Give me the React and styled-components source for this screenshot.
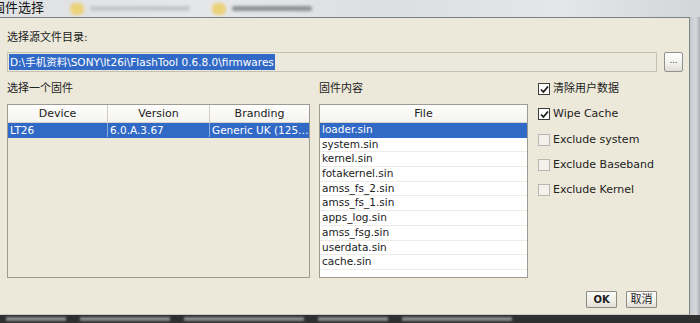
import React from 'react';
import styled, { createGlobalStyle } from 'styled-components';

const Global = createGlobalStyle`
  html, body { margin: 0; padding: 0; background: #c9ccd0; }
  body { font-family: "DejaVu Sans", "Noto Sans CJK SC", sans-serif; }
  * { box-sizing: border-box; }
`;

const Screen = styled.div`
  width: 700px;
  height: 323px;
  display: flex;
  flex-direction: column;
  overflow: hidden;
`;

const TitleStrip = styled.div`
  height: 17px;
  flex: none;
  display: flex;
  align-items: flex-start;
  overflow: hidden;
  background: linear-gradient(90deg, #dfe1e3 0%, #e6e7e8 30%, #dcdfe2 55%, #e4e6e8 80%, #d3d6d9 100%);
`;

const TitleText = styled.span`
  font-family: "Noto Sans CJK SC", sans-serif;
  font-size: 13px;
  line-height: 14px;
  color: #151515;
  margin-left: -8px;
  flex: none;
`;

const TaskTab = styled.div`
  display: flex;
  align-items: center;
  gap: 6px;
  height: 17px;
  margin-left: ${(p) => p.$offset}px;
  flex: none;
  filter: blur(1.8px);
`;

const TaskIcon = styled.span`
  width: 14px;
  height: 12px;
  border-radius: 5px;
  background: #ecd27a;
  flex: none;
`;

const TaskLabel = styled.span`
  width: ${(p) => p.$w}px;
  height: 5px;
  border-radius: 2px;
  background: ${(p) => p.$c};
`;

const Middle = styled.div`
  flex: none;
  height: 298px;
  display: flex;
`;

const Dialog = styled.div`
  width: 690px;
  flex: none;
  background: #ece9da;
  border-top: 1px solid #7d8186;
  border-right: 1px solid #7f8388;
  border-bottom: 1px solid #c9c9c6;
  padding: 0 5px 6px 7px;
  display: flex;
  flex-direction: column;
  color: #222;
`;

const Gutter = styled.div`
  flex: 1;
  background: linear-gradient(90deg, #c6c9cd, #d6d8db 60%, #a9adb2);
`;

const Label = styled.div`
  font-size: 11px;
  line-height: 14px;
  height: 14px;
  margin-top: ${(p) => p.$mt || 0}px;
  white-space: nowrap;
`;

const PathRow = styled.div`
  margin-top: 7px;
  height: 20px;
  display: flex;
  gap: 7px;
  padding-right: 1px;
`;

const PathField = styled.div`
  flex: 1;
  border: 1px solid #c4c1b3;
  border-radius: 1px;
  background: #ebe8dc;
  padding: 1px 1px;
  display: flex;
  align-items: center;
`;

const Selected = styled.span`
  background: #3169c6;
  color: #fff;
  font-size: 10.5px;
  line-height: 16px;
  padding: 0 1px 0 1px;
  white-space: nowrap;
`;

const SmallButton = styled.button`
  width: 19px;
  height: 20px;
  padding: 0 0 3px 0;
  border: 1px solid #8f9091;
  border-radius: 2px;
  background: linear-gradient(#ffffff, #f1f0eb 60%, #dedcd3);
  font-family: "DejaVu Sans", sans-serif;
  font-size: 8px;
  line-height: 10px;
  color: #333;
  letter-spacing: 0;
`;

const Main = styled.div`
  margin-top: 10px;
  display: grid;
  grid-template-columns: 303px 209px 1fr;
  column-gap: 9px;
`;

const Column = styled.div`
  display: flex;
  flex-direction: column;
  gap: 8px;
`;

const TableBox = styled.div`
  height: 174px;
  border: 1px solid #9c9b94;
  background: ${(p) => p.$bg};
  overflow: hidden;
`;

const HeaderRow = styled.div`
  display: grid;
  grid-template-columns: ${(p) => p.$cols};
  height: 18px;
  border-bottom: 1px solid #d6d4cb;
`;

const HeaderCell = styled.div`
  background: linear-gradient(#fefefd, #f4f3ee);
  border-right: 1px solid #cfcdc3;
  font-size: 11px;
  line-height: 17px;
  text-align: center;
  color: #222;
  &:last-child { border-right: none; }
`;

const DataRow = styled.div`
  display: grid;
  grid-template-columns: ${(p) => p.$cols};
  height: ${(p) => p.$h}px;
  background: ${(p) => (p.$sel ? '#3169c6' : 'transparent')};
  color: ${(p) => (p.$sel ? '#fff' : '#222')};
  border-bottom: 1px solid ${(p) => (p.$sel ? '#3169c6' : p.$line)};
`;

const DataCell = styled.div`
  min-width: 0;
  font-size: 10.5px;
  line-height: ${(p) => p.$lh}px;
  padding-left: 2px;
  white-space: nowrap;
  overflow: hidden;
  text-overflow: ellipsis;
  border-right: 1px solid ${(p) => (p.$sep ? 'rgba(255,255,255,0.45)' : 'transparent')};
  &:last-child { border-right: none; }
`;

const Options = styled.div`
  display: flex;
  flex-direction: column;
  gap: 11.25px;
  margin-left: 1px;
`;

const Option = styled.label`
  display: flex;
  align-items: center;
  gap: 3px;
  height: 14px;
  font-size: 11px;
  line-height: 14px;
  white-space: nowrap;
  color: #222;
`;

const Box = styled.span`
  width: 12px;
  height: 12px;
  flex: none;
  border: 1px solid ${(p) => (p.$on ? '#3b3b3b' : '#b9b8b2')};
  background: ${(p) => (p.$on ? '#ffffff' : '#f3f2ed')};
  display: flex;
  align-items: center;
  justify-content: center;
`;

const Footer = styled.div`
  margin-top: 13px;
  display: flex;
  justify-content: flex-end;
  gap: 9px;
  margin-right: 27px;
`;

const DialogButton = styled.button`
  width: 31px;
  height: 17px;
  padding: 0;
  border: 1px solid #8b8a83;
  border-radius: 1px;
  background: linear-gradient(#fbfbf8, #efeee8 60%, #e2e0d7);
  font-family: "DejaVu Sans", "Noto Sans CJK SC", sans-serif;
  font-size: ${(p) => (p.$bold ? 10 : 11)}px;
  font-weight: ${(p) => (p.$bold ? 700 : 400)};
  line-height: 15px;
  color: #1c1c1c;
`;

const BottomStrip = styled.div`
  flex: 1;
  background: #2f2f2f;
  display: flex;
  align-items: center;
  gap: 14px;
  padding-left: 6px;
  overflow: hidden;
`;

const Blurred = styled.span`
  width: ${(p) => p.$w}px;
  height: 4px;
  background: #8a8a8a;
  filter: blur(1px);
  flex: none;
`;

const Check = () => (
  <svg width="9" height="9" viewBox="0 0 9 9">
    <path d="M1 4.5 L3.4 7 L8 1.5" fill="none" stroke="#1a1a1a" strokeWidth="1.8" />
  </svg>
);

const fwCols = '100px 102px minmax(0, 1fr)';
const files = [
  'loader.sin',
  'system.sin',
  'kernel.sin',
  'fotakernel.sin',
  'amss_fs_2.sin',
  'amss_fs_1.sin',
  'apps_log.sin',
  'amss_fsg.sin',
  'userdata.sin',
  'cache.sin',
];
const options = [
  { label: '清除用户数据', on: true },
  { label: 'Wipe Cache', on: true },
  { label: 'Exclude system', on: false },
  { label: 'Exclude Baseband', on: false },
  { label: 'Exclude Kernel', on: false },
];

export default function App() {
  return (
    <Screen>
      <Global />
      <TitleStrip>
        <TitleText>固件选择</TitleText>
        <TaskTab $offset={26}>
          <TaskIcon />
          <TaskLabel $w={100} $c="#c4c7cb" />
        </TaskTab>
        <TaskTab $offset={22}>
          <TaskIcon />
          <TaskLabel $w={80} $c="#8d9196" />
        </TaskTab>
      </TitleStrip>
      <Middle>
        <Dialog>
          <Label $mt={13}>选择源文件目录:</Label>
          <PathRow>
            <PathField>
              <Selected>D:\手机资料\SONY\lt26i\FlashTool 0.6.8.0\firmwares</Selected>
            </PathField>
            <SmallButton>...</SmallButton>
          </PathRow>
          <Main>
            <Column>
              <Label>选择一个固件</Label>
              <TableBox $bg="#ece9da">
                <HeaderRow $cols={fwCols}>
                  <HeaderCell>Device</HeaderCell>
                  <HeaderCell>Version</HeaderCell>
                  <HeaderCell>Branding</HeaderCell>
                </HeaderRow>
                <DataRow $cols={fwCols} $h={15} $sel>
                  <DataCell $lh={14} $sep>LT26</DataCell>
                  <DataCell $lh={14} $sep>6.0.A.3.67</DataCell>
                  <DataCell $lh={14}>Generic UK (1254-6546 R4A)</DataCell>
                </DataRow>
              </TableBox>
            </Column>
            <Column>
              <Label>固件内容</Label>
              <TableBox $bg="#ffffff">
                <HeaderRow $cols="1fr">
                  <HeaderCell>File</HeaderCell>
                </HeaderRow>
                {files.map((f, i) => (
                  <DataRow key={f} $cols="1fr" $h={14.7} $sel={i === 0} $line="#ecebe6">
                    <DataCell $lh={13.7}>{f}</DataCell>
                  </DataRow>
                ))}
              </TableBox>
            </Column>
            <Options>
              {options.map((o) => (
                <Option key={o.label}>
                  <Box $on={o.on}>{o.on && <Check />}</Box>
                  {o.label}
                </Option>
              ))}
            </Options>
          </Main>
          <Footer>
            <DialogButton $bold>OK</DialogButton>
            <DialogButton>取消</DialogButton>
          </Footer>
        </Dialog>
        <Gutter />
      </Middle>
      <BottomStrip>
        <Blurred $w={60} />
        <Blurred $w={90} />
        <Blurred $w={120} />
        <Blurred $w={70} />
        <Blurred $w={110} />
      </BottomStrip>
    </Screen>
  );
}
